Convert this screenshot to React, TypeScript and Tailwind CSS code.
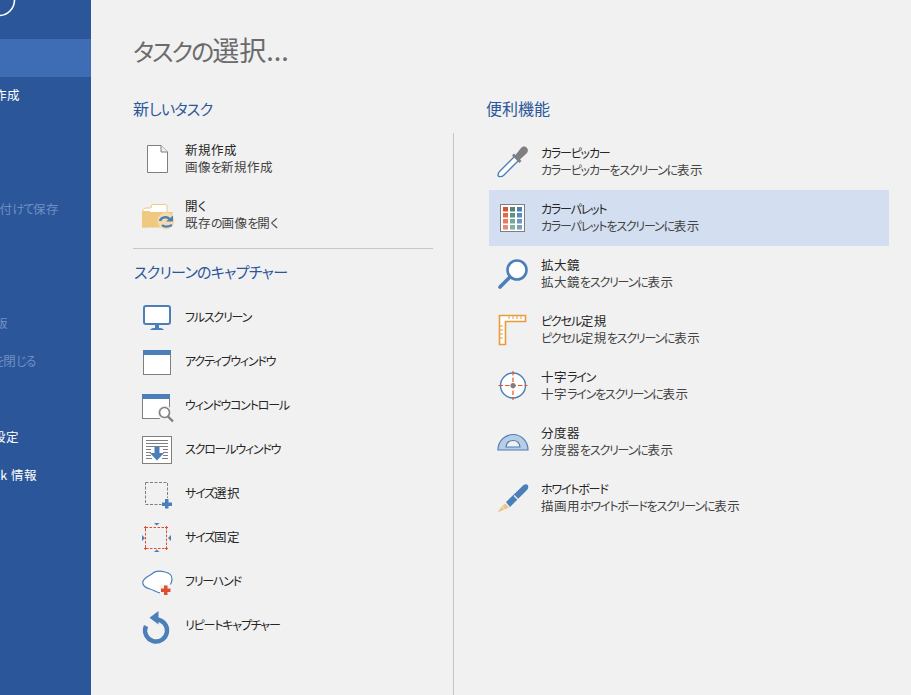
import React from "react";

const B = "#4a7fb9";
const G = "#7f7f7f";
const R = "#dc5030";
const O = "#ec9a3e";

function Svg({ children }: { children: React.ReactNode }) {
  return (
    <svg width="32" height="32" viewBox="0 0 32 32" fill="none" className="shrink-0 overflow-visible">
      {children}
    </svg>
  );
}

const icons: Record<string, React.ReactNode> = {
  doc: (
    <Svg>
      <path d="M5.5 2.5H19L25.5 9V29.5H5.5Z" fill="#fff" stroke={G} />
      <path d="M19 2.5V9H25.5" fill="#eee" stroke={G} />
    </Svg>
  ),
  folder: (
    <Svg>
      <path d="M1 28V11L3 9H9L10 5.5H24L25 7V14H8Z" fill="#fff" stroke="#efc980" />
      <path d="M0 28.5L6 13H31L27 28.5Z" fill="#efc980" />
      <path d="M0 28.5V12H8V16L4 28.5Z" fill="#efc980" />
      <circle cx="24" cy="22" r="8.5" fill="#f4dcae" />
      <path d="M18 22C19 18 25 17 27.5 20" stroke={B} strokeWidth="2.4" />
      <path d="M24 22.5H31V16.5Z" fill={B} />
      <path d="M20 26C22 28 26 28 30 26" stroke={B} strokeWidth="2.2" />
    </Svg>
  ),
  monitor: (
    <Svg>
      <rect x="2" y="5" width="26" height="18" rx="2" fill="#fff" stroke={B} strokeWidth="2" />
      <path d="M13 24H17V27H13Z" fill={B} />
      <path d="M8 29C9 27.5 11 27 12 27H18C19 27 21 27.5 22 29Z" fill={B} />
    </Svg>
  ),
  window: (
    <Svg>
      <rect x="1.5" y="5.5" width="27" height="24" fill="#fff" stroke={G} />
      <rect x="1" y="5" width="28" height="5" fill={B} />
    </Svg>
  ),
  control: (
    <Svg>
      <rect x="0.5" y="5.5" width="27" height="24" fill="#fff" stroke={G} />
      <rect x="0" y="5" width="28" height="5" fill={B} />
      <circle cx="23" cy="24" r="7.5" fill="#f1f1f1" />
      <circle cx="22.5" cy="23.5" r="5" fill="#fff" stroke={G} strokeWidth="1.6" />
      <path d="M26 27.5L31 32.5" stroke={G} strokeWidth="2.4" />
    </Svg>
  ),
  scroll: (
    <Svg>
      <rect x="0.5" y="3.5" width="29" height="27" fill="#fff" stroke={G} />
      <path d="M4 7.5H26M4 10.5H26M4 13.5H26M4 16.5H9M21 16.5H26M4 19.5H9M21 19.5H26M4 22.5H9M21 22.5H26M4 25.5H10M20 25.5H26" stroke={G} />
      <path d="M12.5 14H17.5V20H22L15 27.5L8 20H12.5Z" fill={B} />
    </Svg>
  ),
  select: (
    <Svg>
      <rect x="3.5" y="5.5" width="22" height="22" stroke={G} strokeDasharray="3 1.5" />
      <rect x="19.5" y="21" width="10" height="10" fill="#f1f1f1" />
      <path d="M23 22H26.5V25.5H30V29H26.5V31.5H23V29H20V25.5H23Z" fill={B} />
    </Svg>
  ),
  fixed: (
    <Svg>
      <rect x="3.5" y="6.5" width="21" height="21" stroke={R} strokeDasharray="2.5 1.5" />
      <path d="M2 6.5H5M23 6.5H26M2 27.5H5M23 27.5H26M3.5 5V8.5M24.5 5V8.5M3.5 25.5V29M24.5 25.5V29" stroke={R} />
      <path d="M12 2H17.5L14.7 4.5Z M12 31H17.5L14.7 28.5Z M0 14V20L3 17Z M29 14V20L26 17Z" fill={B} />
    </Svg>
  ),
  free: (
    <Svg>
      <path d="M0.7 17C2 12 8 11 11 8C14 5.5 19 6 23 7C28 8 30 11 30 14C30 18 27 22 26 24L21 28C16 29 12 25 8 24C4 23 0.7 21 0.7 17Z" fill="#fff" stroke={B} strokeWidth="1.2" />
      <rect x="18" y="19.5" width="11" height="11" fill="#f1f1f1" />
      <path d="M22 20.5H25.5V23.5H28.5V27H25.5V30H22V27H19V23.5H22Z" fill={R} />
    </Svg>
  ),
  repeat: (
    <Svg>
      <path d="M14 10.5A11 11 0 1 1 4 17" stroke={B} strokeWidth="4.4" />
      <path d="M16.5 2V15.5L7.5 8.8Z" fill={B} />
    </Svg>
  ),
  picker: (
    <Svg>
      <path d="M2.5 25.5L18 10L22 14L6.5 29.5C5 31 1 31 1 29.5C1 28 1.5 26.5 2.5 25.5Z" fill="#fff" stroke={B} strokeWidth="1.4" />
      <path d="M15 9.5L22.5 17L24.5 15L23 13.5L30 7C32 4.5 30.5 1 27.5 0.5C26 0.3 25 1 24 2L18.5 9L17 7.5Z" fill={G} />
    </Svg>
  ),
  palette: (
    <Svg>
      <rect x="3.5" y="2.5" width="24" height="27" fill="#fff" stroke={G} />
      <rect x="6" y="5" width="5" height="4.5" fill="#d9502e" />
      <rect x="13" y="5" width="5" height="4.5" fill="#4f8572" />
      <rect x="20" y="5" width="5" height="4.5" fill="#4a7fb9" />
      <rect x="6" y="11" width="5" height="4.5" fill="#df6a4c" />
      <rect x="13" y="11" width="5" height="4.5" fill="#5f937f" />
      <rect x="20" y="11" width="5" height="4.5" fill="#5a8cc0" />
      <rect x="6" y="17" width="5" height="4.5" fill="#e37d63" />
      <rect x="13" y="17" width="5" height="4.5" fill="#78a894" />
      <rect x="20" y="17" width="5" height="4.5" fill="#6f97bd" />
      <rect x="6" y="23" width="5" height="4.5" fill="#e58a74" />
      <rect x="13" y="23" width="5" height="4.5" fill="#84b09e" />
      <rect x="20" y="23" width="5" height="4.5" fill="#7c9fbf" />
    </Svg>
  ),
  glass: (
    <Svg>
      <circle cx="20" cy="12" r="9.5" fill="#fff" stroke={B} strokeWidth="2.6" />
      <path d="M12.5 19.5L3 29" stroke={B} strokeWidth="3.6" strokeLinecap="round" />
    </Svg>
  ),
  ruler: (
    <Svg>
      <path d="M2.5 1.5H28.5V7.5H8.5V30.5H2.5Z" fill="#fff" stroke={O} strokeWidth="1.6" />
      <path d="M12 2V5M16 2V5M20 2V5M24 2V5M3 12H6M3 16H6M3 20H6M3 24H6" stroke={O} />
    </Svg>
  ),
  cross: (
    <Svg>
      <circle cx="16" cy="15.5" r="12.5" fill="#fff" stroke={B} strokeWidth="1.4" />
      <path d="M16 1V30M1.5 15.5H30.5" stroke="#e8552d" strokeWidth="1.2" strokeDasharray="4.5 2" />
      <circle cx="16" cy="15.5" r="2.6" fill={G} />
    </Svg>
  ),
  protractor: (
    <Svg>
      <path d="M1 24C1 15 8 8.5 16 8.5C24 8.5 31 15 31 24Z" fill="#b9cde4" stroke={B} strokeWidth="1.2" />
      <path d="M9 21C9.5 17 12 14.5 16 14.5C20 14.5 22.5 17 23 21Z" fill="#f1f1f1" stroke={B} strokeWidth="1.2" />
    </Svg>
  ),
  pen: (
    <Svg>
      <path d="M0.5 30.5L4.5 24.5L7.5 27.5Z" fill="#eec58c" />
      <path d="M5 24L8 27.5L12 25.5L8.5 21.5Z" fill="#eec58c" />
      <path d="M9 20L23.5 6C26 3.5 28 1.5 30 2.5C32 3.5 31.5 6 30 8L13 25Z" fill={B} />
      <path d="M17 13.5L21 17.5" stroke="#f1f1f1" strokeWidth="1.2" />
    </Svg>
  ),
};

function J({ t, kana }: { t: string; kana: string }) {
  const parts = t.split(/([ぁ-んァ-ヶー]+)/);
  return (
    <>
      {parts.map((p, i) =>
        i % 2 === 1 ? (
          <span key={i} className={kana}>
            {p}
          </span>
        ) : (
          <span key={i}>{p}</span>
        ),
      )}
    </>
  );
}

const SMALL = "text-[12px] tracking-[-1.2px]";
const HEAD = "text-[15px] tracking-[-0.7px]";
const TITLE = "text-[24px] tracking-[-2px]";

const sidebar: { t?: string; pr?: number; dim?: boolean; active?: boolean }[] = [
  { active: true },
  { t: "新規作成", pr: 71 },
  {},
  {},
  { t: "名前を付けて保存", pr: 32, dim: true },
  {},
  {},
  { t: "最新版", pr: 83, dim: true },
  { t: "すべてを閉じる", pr: 56, dim: true },
  {},
  { t: "プログラムの設定", pr: 72 },
  { t: "PicPick 情報", pr: 54 },
];

function SideText({ t, pr, dim }: { t: string; pr: number; dim?: boolean }) {
  return (
    <span
      className={`whitespace-nowrap text-[12.5px] tracking-[0.5px] ${dim ? "text-[#6f8fc4]" : "text-white"}`}
      style={{ paddingRight: pr }}
    >
      <J t={t} kana={SMALL} />
    </span>
  );
}

function LeftRow({ icon, title, sub }: { icon: string; title: string; sub?: string }) {
  return (
    <div className={`flex items-center gap-[11px] pl-[9px] ${sub ? "h-[56px]" : "h-[44px]"}`}>
      {icons[icon]}
      <div className="flex flex-col pb-[2px] text-[12.5px] leading-[17px] tracking-[0.5px]">
        <span className="text-[#262626]">
          <J t={title} kana={SMALL} />
        </span>
        {sub && (
          <span className="text-[#444]">
            <J t={sub} kana={SMALL} />
          </span>
        )}
      </div>
    </div>
  );
}

function RightRow({ icon, title, sub, on }: { icon: string; title: string; sub: string; on?: boolean }) {
  return (
    <div className={`flex h-[56px] items-center gap-[12px] pl-[8px] ${on ? "bg-[#d3dff0]" : ""}`}>
      {icons[icon]}
      <div className="flex flex-col pb-[2px] text-[12.5px] leading-[17px] tracking-[0.5px]">
        <span className="text-[#262626]">
          <J t={title} kana={SMALL} />
        </span>
        <span className="text-[#444]">
          <J t={sub} kana={SMALL} />
        </span>
      </div>
    </div>
  );
}

export default function App() {
  return (
    <div className="flex h-[695px] w-[911px] overflow-hidden bg-[#f1f1f1] font-['Noto_Sans_CJK_JP',sans-serif] [font-feature-settings:'palt']">
      <aside className="flex w-[91px] shrink-0 flex-col overflow-hidden bg-[#2b579a]">
        <div className="h-[39px] shrink-0">
          <svg width="20" height="20" viewBox="0 0 20 20" fill="none">
            <circle cx="-1" cy="0" r="15.5" stroke="#fff" strokeWidth="1.6" />
          </svg>
        </div>
        {sidebar.map((s, i) => (
          <div
            key={i}
            className={`flex h-[38px] shrink-0 items-center justify-end pb-[2px] ${s.active ? "bg-[#3e6db5]" : ""}`}
          >
            {s.t && <SideText t={s.t} pr={s.pr as number} dim={s.dim} />}
          </div>
        ))}
      </aside>

      <main className="flex flex-1 flex-col pl-[42px]">
        <h1 className="pt-[30px] text-[27px] leading-[40px] font-normal text-[#6b6b6b]">
          <J t="タスクの選択..." kana={TITLE} />
        </h1>
        <div className="mt-[25px] flex h-[24px] items-center text-[16px] text-[#2b579a]">
          <span className="w-[353px]">
            <J t="新しいタスク" kana={HEAD} />
          </span>
          <span>便利機能</span>
        </div>
        <div className="mt-[13px] flex flex-1">
          <section className="-mt-[2px] w-[300px] shrink-0">
            <LeftRow icon="doc" title="新規作成" sub="画像を新規作成" />
            <LeftRow icon="folder" title="開く" sub="既存の画像を開く" />
            <div className="mt-[5px] h-px bg-[#c6c6c6]" />
            <div className="ml-px flex h-[46px] items-center pb-[2px] text-[16px] text-[#2b579a]">
              <span>
                <J t="スクリーンのキャプチャー" kana={HEAD} />
              </span>
            </div>
            <LeftRow icon="monitor" title="フルスクリーン" />
            <LeftRow icon="window" title="アクティブウィンドウ" />
            <LeftRow icon="control" title="ウィンドウコントロール" />
            <LeftRow icon="scroll" title="スクロールウィンドウ" />
            <LeftRow icon="select" title="サイズ選択" />
            <LeftRow icon="fixed" title="サイズ固定" />
            <LeftRow icon="free" title="フリーハンド" />
            <LeftRow icon="repeat" title="リピートキャプチャー" />
          </section>
          <section className="ml-[20px] flex-1 border-l border-[#c6c6c6] pt-px pr-[22px] pl-[35px]">
            <RightRow icon="picker" title="カラーピッカー" sub="カラーピッカーをスクリーンに表示" />
            <RightRow icon="palette" title="カラーパレット" sub="カラーパレットをスクリーンに表示" on />
            <RightRow icon="glass" title="拡大鏡" sub="拡大鏡をスクリーンに表示" />
            <RightRow icon="ruler" title="ピクセル定規" sub="ピクセル定規をスクリーンに表示" />
            <RightRow icon="cross" title="十字ライン" sub="十字ラインをスクリーンに表示" />
            <RightRow icon="protractor" title="分度器" sub="分度器をスクリーンに表示" />
            <RightRow icon="pen" title="ホワイトボード" sub="描画用ホワイトボードをスクリーンに表示" />
          </section>
        </div>
      </main>
    </div>
  );
}
